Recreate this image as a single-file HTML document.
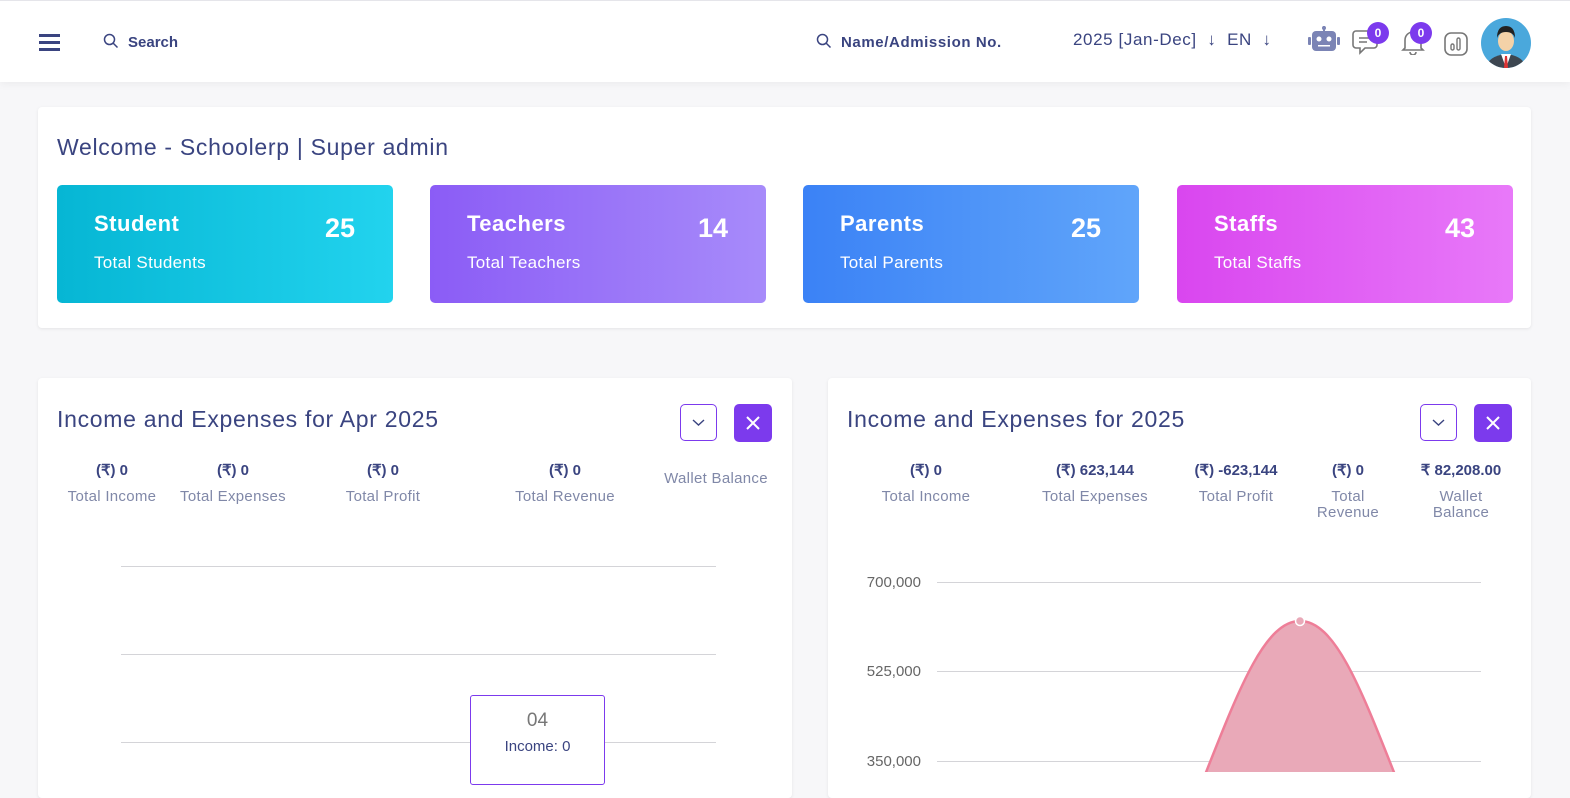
<!DOCTYPE html>
<html><head><style>
*{box-sizing:border-box;margin:0;padding:0}
body{width:1570px;height:772px;overflow:hidden;background:#f7f7f9;font-family:"Liberation Sans",sans-serif;color:#3a4480;position:relative}
.top{position:absolute;left:0;top:0;width:1570px;height:82px;background:#fff;border-top:1px solid #e5e5ea;box-shadow:0 2px 8px rgba(0,0,0,.05)}
.abs{position:absolute}
.card{position:absolute;background:#fff;border-radius:4px;box-shadow:0 1px 3px rgba(0,0,0,.08)}
.stat{position:absolute;top:185px;width:336px;height:118px;border-radius:5px;color:#fff}
.stat b{position:absolute;left:37px;top:26px;font-size:22px;letter-spacing:.5px}
.stat i{position:absolute;right:38px;top:28px;font-size:27px;font-weight:bold;font-style:normal}
.stat span{position:absolute;left:37px;top:68px;font-size:17px;letter-spacing:.3px}
.h{font-size:23px;color:#3a4480;letter-spacing:.7px;white-space:nowrap}
.v{position:absolute;font-size:15px;font-weight:bold;text-align:center;color:#3a4480}
.l{position:absolute;font-size:15px;color:#8088a8;text-align:center;line-height:16px;letter-spacing:.3px}
.grid{position:absolute;height:1px;background:#d4d4d8}
.ax{position:absolute;font-size:15px;color:#666;text-align:right;width:60px}
.badge{position:absolute;width:22px;height:22px;border-radius:50%;background:#7c3aed;color:#fff;font-size:12px;text-align:center;line-height:22px;font-weight:bold}
</style></head><body>
<div class="top">
 <div class="abs" style="left:39px;top:33px;width:21px;height:3px;background:#3a4480;box-shadow:0 7px 0 #3a4480,0 14px 0 #3a4480"></div>
 <svg class="abs" style="left:103px;top:32px" width="16" height="16" viewBox="0 0 16 16"><circle cx="6.5" cy="6.5" r="5" fill="none" stroke="#3a4480" stroke-width="1.5"/><path d="M10 10l4.5 4.5" stroke="#3a4480" stroke-width="1.5"/></svg>
 <div class="abs" style="left:128px;top:33px;font-size:15px;font-weight:bold">Search</div>
 <svg class="abs" style="left:816px;top:32px" width="16" height="16" viewBox="0 0 16 16"><circle cx="6.5" cy="6.5" r="5" fill="none" stroke="#3a4480" stroke-width="1.5"/><path d="M10 10l4.5 4.5" stroke="#3a4480" stroke-width="1.5"/></svg>
 <div class="abs" style="left:841px;top:33px;font-size:15px;font-weight:bold;letter-spacing:.6px">Name/Admission No.</div>
 <div class="abs" style="left:1073px;top:29px;font-size:17px;letter-spacing:.6px;white-space:nowrap">2025 [Jan-Dec] &nbsp;↓ &nbsp;EN &nbsp;↓</div>
 <svg class="abs" style="left:1308px;top:25px" width="32" height="28" viewBox="0 0 32 28"><rect x="15" y="0" width="2" height="5" fill="#7b84b5"/><circle cx="16" cy="2" r="2" fill="#7b84b5"/><rect x="4" y="5" width="24" height="20" rx="4" fill="#7b84b5"/><rect x="0" y="11" width="3" height="8" rx="1" fill="#7b84b5"/><rect x="29" y="11" width="3" height="8" rx="1" fill="#7b84b5"/><circle cx="11" cy="13" r="2.5" fill="#fff"/><circle cx="21" cy="13" r="2.5" fill="#fff"/><rect x="10" y="19" width="12" height="1.5" fill="#fff"/></svg>
 <svg class="abs" style="left:1352px;top:28px" width="28" height="26" viewBox="0 0 28 26"><path d="M4 2h18a3 3 0 0 1 3 3v11a3 3 0 0 1-3 3h-9l-5 5v-5H4a3 3 0 0 1-3-3V5a3 3 0 0 1 3-3z" fill="none" stroke="#777" stroke-width="1.6"/><path d="M7 9h12M7 13h8" stroke="#777" stroke-width="1.6"/></svg>
 <div class="badge" style="left:1367px;top:21px">0</div>
 <svg class="abs" style="left:1401px;top:28px" width="24" height="26" viewBox="0 0 24 26"><path d="M4 19V11a8 8 0 0 1 16 0v8l2 2H2z" fill="none" stroke="#777" stroke-width="1.6"/><path d="M9 23a3 3 0 0 0 6 0" fill="none" stroke="#777" stroke-width="1.6"/></svg>
 <div class="badge" style="left:1410px;top:21px">0</div>
 <svg class="abs" style="left:1444px;top:31px" width="24" height="24" viewBox="0 0 24 24"><rect x="1" y="1" width="22" height="22" rx="6" fill="none" stroke="#777" stroke-width="1.6"/><rect x="7" y="12" width="3" height="6" rx="1.5" fill="none" stroke="#777" stroke-width="1.4"/><rect x="13" y="6" width="3" height="12" rx="1.5" fill="none" stroke="#777" stroke-width="1.4"/></svg>
 <svg class="abs" style="left:1481px;top:17px" width="50" height="50" viewBox="0 0 50 50"><clipPath id="c"><circle cx="25" cy="25" r="25"/></clipPath><g clip-path="url(#c)"><rect width="50" height="50" fill="#4aa8dc"/><path d="M5 50q2-12 20-14q18 2 20 14z" fill="#3d4650"/><path d="M20 36l5 14l5-14z" fill="#fff"/><path d="M24 38h2l1 12h-4z" fill="#d33"/><ellipse cx="25" cy="23" rx="8" ry="10" fill="#f4d2a8"/><path d="M16 20q0-12 9-12t9 12q-2-6-9-6t-9 6z" fill="#222"/></g></svg>
</div>

<div class="card" style="left:38px;top:107px;width:1493px;height:221px">
 <div class="h abs" style="left:19px;top:27px">Welcome - Schoolerp | Super admin</div>
</div>
<div class="stat" style="left:57px;background:linear-gradient(90deg,#06b6d4,#22d3ee)"><b>Student</b><i>25</i><span>Total Students</span></div>
<div class="stat" style="left:430px;background:linear-gradient(90deg,#8b5cf6,#a78bfa)"><b>Teachers</b><i>14</i><span>Total Teachers</span></div>
<div class="stat" style="left:803px;background:linear-gradient(90deg,#3b82f6,#60a5fa)"><b>Parents</b><i>25</i><span>Total Parents</span></div>
<div class="stat" style="left:1177px;background:linear-gradient(90deg,#d946ef,#e879f9)"><b>Staffs</b><i>43</i><span>Total Staffs</span></div>

<div class="card" style="left:38px;top:378px;width:754px;height:420px">
 <div class="h abs" style="left:19px;top:28px">Income and Expenses for Apr 2025</div>
 <div class="abs" style="left:642px;top:26px;width:37px;height:37px;border:1px solid #7c3aed;border-radius:5px"><svg width="35" height="35"><path d="M12 15l5.5 5 5.5-5" fill="none" stroke="#3a4480" stroke-width="1.4"/></svg></div>
 <div class="abs" style="left:696px;top:26px;width:38px;height:38px;background:#7c3aed;border-radius:5px"><svg width="38" height="38"><path d="M13 13l12 12M25 13l-12 12" stroke="#fff" stroke-width="2"/></svg></div>
</div>
<div class="v" style="left:62px;top:461px;width:100px">(₹) 0</div><div class="l" style="left:52px;top:489px;width:120px">Total Income</div>
<div class="v" style="left:183px;top:461px;width:100px">(₹) 0</div><div class="l" style="left:168px;top:489px;width:130px">Total Expenses</div>
<div class="v" style="left:333px;top:461px;width:100px">(₹) 0</div><div class="l" style="left:333px;top:489px;width:100px">Total Profit</div>
<div class="v" style="left:515px;top:461px;width:100px">(₹) 0</div><div class="l" style="left:500px;top:489px;width:130px">Total Revenue</div>
<div class="l" style="left:651px;top:471px;width:130px">Wallet Balance</div>
<div class="grid" style="left:121px;top:566px;width:595px"></div>
<div class="grid" style="left:121px;top:654px;width:595px"></div>
<div class="grid" style="left:121px;top:742px;width:595px"></div>
<div class="abs" style="left:470px;top:695px;width:135px;height:90px;background:#fff;border:1px solid #7c3aed;border-radius:3px;text-align:center">
 <div style="font-size:19px;color:#777;margin-top:14px">04</div>
 <div style="font-size:15px;color:#3a4480;margin-top:6px">Income: 0</div>
</div>

<div class="card" style="left:828px;top:378px;width:703px;height:420px">
 <div class="h abs" style="left:19px;top:28px">Income and Expenses for 2025</div>
 <div class="abs" style="left:592px;top:26px;width:37px;height:37px;border:1px solid #7c3aed;border-radius:5px"><svg width="35" height="35"><path d="M12 15l5.5 5 5.5-5" fill="none" stroke="#3a4480" stroke-width="1.4"/></svg></div>
 <div class="abs" style="left:646px;top:26px;width:38px;height:38px;background:#7c3aed;border-radius:5px"><svg width="38" height="38"><path d="M13 13l12 12M25 13l-12 12" stroke="#fff" stroke-width="2"/></svg></div>
</div>
<div class="v" style="left:876px;top:461px;width:100px">(₹) 0</div><div class="l" style="left:861px;top:489px;width:130px">Total Income</div>
<div class="v" style="left:1040px;top:461px;width:110px">(₹) 623,144</div><div class="l" style="left:1030px;top:489px;width:130px">Total Expenses</div>
<div class="v" style="left:1181px;top:461px;width:110px">(₹) -623,144</div><div class="l" style="left:1186px;top:489px;width:100px">Total Profit</div>
<div class="v" style="left:1318px;top:461px;width:60px">(₹) 0</div><div class="l" style="left:1313px;top:489px;width:70px">Total<br>Revenue</div>
<div class="v" style="left:1408px;top:461px;width:106px">₹ 82,208.00</div><div class="l" style="left:1421px;top:489px;width:80px">Wallet<br>Balance</div>
<div class="ax" style="left:861px;top:574px">700,000</div>
<div class="ax" style="left:861px;top:663px">525,000</div>
<div class="ax" style="left:861px;top:753px">350,000</div>
<div class="grid" style="left:937px;top:582px;width:544px"></div>
<div class="grid" style="left:937px;top:671px;width:544px"></div>
<div class="grid" style="left:937px;top:761px;width:544px"></div>
<svg class="abs" style="left:0;top:0" width="1570" height="772"><path d="M1195 800C1235 700 1262 621 1300 621C1338 621 1365 700 1405 800Z" fill="#e9a9b8" stroke="#ee7e98" stroke-width="2.5"/><circle cx="1300" cy="621" r="4.5" fill="#e9a9b8" stroke="#fff" stroke-width="1.5"/></svg>
</body></html>
